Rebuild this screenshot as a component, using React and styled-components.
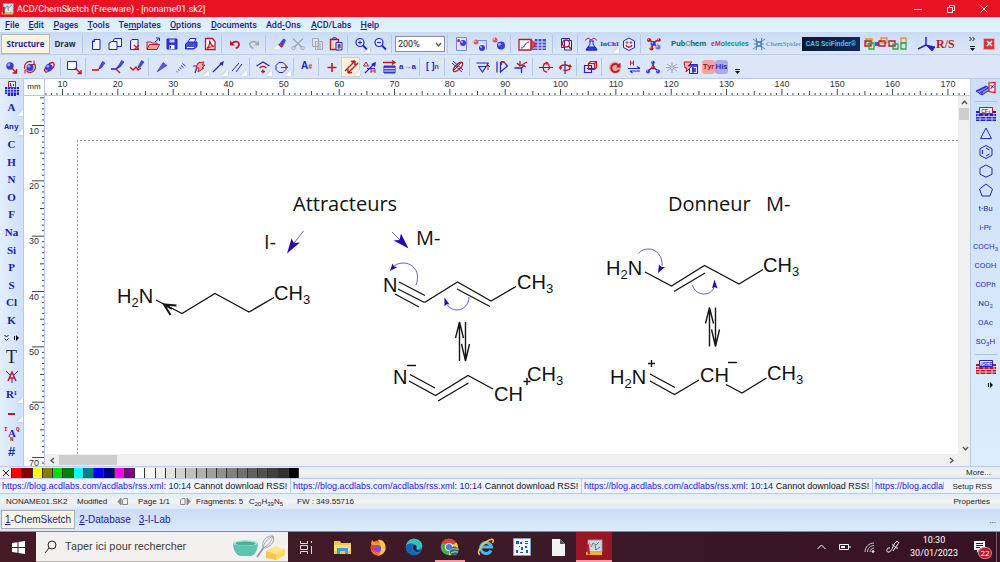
import React, { useEffect, useState } from 'react';
import styled, { createGlobalStyle, css } from 'styled-components';

const B = '#2323c8';
const N = '#1c1c96';
const R = '#c01820';
const G = '#a3a8b3';

const GlobalStyle = createGlobalStyle`
  *, *::before, *::after { box-sizing: border-box; }
  body { margin: 0; font-family: "Liberation Sans", Arial, sans-serif; font-size: 9px; color: #222; }
  button, select, input { font: inherit; color: inherit; }
  button { border: 0; padding: 0; margin: 0; background: none; cursor: pointer; }
  svg { display: block; flex: none; }
`;

const Shell = styled.div`
  min-height: 100vh;
  display: flex;
  flex-direction: column;
  background: #dbe7f8;
  overflow: hidden;
`;
const Spacer = styled.i`
  flex: 1;
`;

/* ---------- title and menu ---------- */

const TitleBar = styled.header`
  height: 17px;
  display: flex;
  align-items: center;
  background: #e81224;
  color: #fff;
`;
const AppTitle = styled.h1`
  margin: 0 auto 0 3px;
  font: 400 9px/16px Roboto, "Open Sans", sans-serif;
`;
const WindowButton = styled.button`
  width: 33px;
  height: 16px;
  display: grid;
  place-items: center;
`;
const MenuBar = styled.nav`
  height: 15px;
  display: flex;
  align-items: center;
  padding-left: 5px;
  gap: 9px;
  background: linear-gradient(#d6efff, #e3f2ff);
  color: #221c8c;
  font: 500 9px/14px Roboto, "Open Sans", sans-serif;
  white-space: nowrap;
`;
const MenuItem = styled.button`
  min-width: ${(p) => p.$w}px;
  text-align: left;
  white-space: nowrap;
`;

/* ---------- toolbars ---------- */

const Toolbar = styled.div`
  height: ${(p) => p.$h}px;
  display: flex;
  align-items: center;
  padding-left: 1px;
  background: ${(p) => (p.$first ? 'linear-gradient(#cadcf5, #dce8f9)' : '#dbe7f8')};
  border-top: 1px solid ${(p) => (p.$first ? '#c9dbf4' : '#b9cff0')};
`;
const Tool = styled.button`
  position: relative;
  flex: none;
  width: ${(p) => p.$w || 19}px;
  height: 20px;
  display: grid;
  place-items: center;
  ${(p) => p.$on && css`background: #fbf2da; outline: 1px solid #d5cfc0; outline-offset: -1px;`}
  ${(p) => p.$menu && css`
    &::after {
      content: '';
      position: absolute;
      right: 0;
      bottom: 1px;
      border: 3px solid;
      border-color: transparent #fff #fff transparent;
      filter: drop-shadow(0 0 1px #a9b8d4);
    }
  `}
`;
const Sep = styled.i`
  flex: none;
  width: 6px;
  height: 18px;
  background: linear-gradient(#b4c8ea, #b4c8ea) 2px 0 / 1px 100% no-repeat;
`;
const ModeButton = styled.button`
  height: 20px;
  width: ${(p) => p.$w}px;
  font: 700 8px/18px "Open Sans", sans-serif;
  color: ${(p) => (p.$on ? N : '#2b2b3c')};
  ${(p) => p.$on && css`background: #fbf4e0; border: 1px solid #b9b9b4;`}
`;
const Combo = styled.label`
  position: relative;
  width: 50px;
  height: 16px;
  svg { position: absolute; right: 3px; top: 5px; pointer-events: none; }
`;
const ZoomSelect = styled.select`
  appearance: none;
  width: 100%;
  height: 100%;
  padding: 0 2px;
  border: 1px solid #8e8e94;
  border-radius: 0;
  background: #fff;
  font: 9px/14px Roboto, sans-serif;
`;
const Brands = styled.div`
  display: flex;
  align-items: center;
  gap: 4px;
  margin-left: 8px;
`;
const Brand = styled.a`
  flex: none;
  display: flex;
  align-items: center;
  gap: ${(p) => p.$gap || 0}px;
  height: 14px;
  width: ${(p) => p.$w}px;
  text-decoration: none;
  white-space: nowrap;
  color: ${(p) => p.$c || N};
  font: ${(p) => p.$font || '700 7px/14px "Liberation Sans", sans-serif'};
  ${(p) => p.$bg && css`background: ${p.$bg}; justify-content: center;`}
  span { color: ${(p) => p.$c2}; }
`;
const ToolbarEnd = styled.div`
  margin-left: auto;
  padding-right: 6px;
  display: flex;
  align-items: center;
  gap: 8px;
`;
const CloseBox = styled.button`
  width: 10px;
  height: 10px;
  display: grid;
  place-items: center;
  background: #d9333b;
  outline: 1px solid #f0a4a4;
`;
const Residues = styled.div`
  display: flex;
  padding-left: 2px;
`;
const Residue = styled.button`
  height: 14px;
  width: 13px;
  border-radius: 3px;
  background: ${(p) => p.$bg};
  color: ${(p) => p.$c};
  font: 500 8px/13px Roboto, sans-serif;
`;

/* ---------- work area ---------- */

const Work = styled.main`
  flex: 1;
  display: flex;
  min-width: 0;
`;
const LeftBar = styled.aside`
  flex: none;
  width: 23px;
  display: flex;
  flex-direction: column;
  align-items: center;
  border-top: 1px solid #b9cff0;
  background: linear-gradient(90deg, #e2eefd, #cfe1f8);
`;
const SideTool = styled(Tool)`
  width: 22px;
  height: 19px;
  color: ${(p) => p.$c || '#2020b0'};
  font: 700 11px/17px "Liberation Serif", serif;
  white-space: nowrap;
  ${(p) => p.$mono && css`font: 700 8px/17px "Liberation Mono", monospace;`}
`;
const Elements = styled.div`
  display: flex;
  flex-direction: column;
  height: 193px;
  ${SideTool} { flex: 1; min-height: 0; height: auto; }
`;
const MoreRow = styled.div`
  flex: none;
  height: 18px;
  width: 100%;
  display: flex;
  align-items: center;
  justify-content: ${(p) => (p.$right ? 'center' : 'space-between')};
  padding: ${(p) => (p.$right ? '0 0 0 9px' : '0 4px')};
`;
const VRulerColumn = styled.div`
  flex: none;
  width: 22px;
  display: flex;
  flex-direction: column;
  background: #fff;
  border: solid #b7cbee;
  border-width: 1px 1px 0 1px;
`;
const Unit = styled.div`
  height: 17px;
  text-align: center;
  font: 8px/15px "Liberation Sans", sans-serif;
  border-bottom: 1px solid #b7cbee;
`;
const RulerBox = styled.div`
  flex: 1;
  position: relative;
  overflow: hidden;
  min-height: 0;
  svg { position: absolute; inset: 0; }
`;
const Center = styled.div`
  flex: 1;
  min-width: 0;
  display: flex;
  flex-direction: column;
  background: #fff;
`;
const HRuler = styled.div`
  height: 18px;
  border-top: 1px solid #b7cbee;
  border-bottom: 1px solid #b7cbee;
  overflow: hidden;
`;
const CanvasRow = styled.div`
  flex: 1;
  display: flex;
  min-height: 0;
`;
const Canvas = styled.div`
  flex: 1;
  min-width: 0;
  overflow: hidden;
`;
const VScroll = styled.div`
  flex: none;
  width: 12px;
  display: flex;
  flex-direction: column;
  align-items: center;
  background: #f0f0f0;
`;
const HScroll = styled.div`
  height: 12px;
  display: flex;
  align-items: center;
  padding-right: 12px;
  background: #f0f0f0;
`;
const ScrollButton = styled.button`
  width: 14px;
  height: 12px;
  display: grid;
  place-items: center;
  margin: ${(p) => (p.$end ? 'auto 0 0 auto' : '0')};
`;
const Thumb = styled.div`
  background: #cdcdcd;
  width: ${(p) => p.$w}px;
  height: ${(p) => p.$h}px;
`;
const RightBar = styled.aside`
  flex: none;
  width: 30px;
  display: flex;
  flex-direction: column;
  align-items: center;
  border: solid #b7cbee;
  border-width: 1px 0 0 1px;
  background: linear-gradient(#cddff7, #dcedfd);
`;
const GroupTool = styled(Tool)`
  width: 28px;
  height: 19px;
  color: #3030cc;
  font: 8px/19px Roboto, "Liberation Sans", sans-serif;
  sub { font-size: 6px; line-height: 1; vertical-align: -2px; }
`;
const SideRule = styled.hr`
  width: 22px;
  height: 1px;
  margin: 3px 0 2px;
  border: 0;
  background: #a9c2ea;
`;

/* ---------- bottom bars ---------- */

const PaletteBar = styled.div`
  height: 12px;
  display: flex;
  align-items: center;
  justify-content: space-between;
  border-top: 1px solid #b7cbee;
  background: linear-gradient(#e3ecfa, #f3f3ef 50%, #dfe9f8);
`;
const Swatches = styled.div`
  width: 299px;
  height: 10px;
  display: flex;
`;
const Swatch = styled.button`
  flex: ${(p) => (p.$none ? '0 0 12px' : '1')};
  background: ${(p) => p.$c};
  border-right: 1px solid #333;
  display: grid;
  place-items: center;
`;
const BarButton = styled.button`
  padding-right: ${(p) => p.$r}px;
  font: 8px/11px "Liberation Sans", sans-serif;
  white-space: nowrap;
`;
const RssBar = styled.div`
  height: 16px;
  display: flex;
  align-items: center;
  justify-content: space-between;
  border: solid #b7cbee;
  border-width: 1px 0;
  background: #f0f4fb;
`;
const Feed = styled.div`
  flex: 1;
  min-width: 0;
  display: flex;
  overflow: hidden;
  margin-right: 8px;
`;
const FeedItem = styled.div`
  flex: none;
  width: 291px;
  padding-left: 2px;
  white-space: nowrap;
  font: 9px/14px "Liberation Sans", sans-serif;
  color: #111;
  background: linear-gradient(#b7cbee, #b7cbee) right / 1px 100% no-repeat;
  a { color: #2222e0; text-decoration: none; }
  time { color: #1c1c80; }
`;
const StatusBar = styled.div`
  height: 15px;
  display: flex;
  align-items: center;
  padding-left: 6px;
  background: linear-gradient(#e3ecfa, #f3f3ef 50%, #dfe9f8);
  font: 8px/14px "Liberation Sans", sans-serif;
  white-space: nowrap;
`;
const Cell = styled.span`
  flex: none;
  width: ${(p) => p.$w}px;
  sub { font-size: 6px; line-height: 1; vertical-align: -2px; }
`;
const Tabs = styled.div`
  height: 23px;
  display: flex;
  align-items: center;
  padding: 0 4px 0 1px;
  background: linear-gradient(#cadcf6, #dceafb);
  border-bottom: 1px solid #7f8ea8;
`;
const Tab = styled.button`
  height: 19px;
  padding: 0 3px;
  margin-bottom: 1px;
  font: 10px/17px "Liberation Sans", sans-serif;
  color: ${N};
  border: 1px solid ${(p) => (p.$on ? '#a9adb0' : 'transparent')};
  background: ${(p) => (p.$on ? '#fbf4e2' : 'none')};
`;

/* ---------- task bar ---------- */

const TaskBar = styled.footer`
  height: 30px;
  display: flex;
  align-items: stretch;
  background: linear-gradient(90deg, #451a26, #3c1a28 50%, #361224);
  color: #fff;
`;
const TaskButton = styled.button`
  width: 36px;
  display: grid;
  place-items: center;
  ${(p) => p.$on && css`background: #9a1526;`}
  ${(p) => p.$open && css`
    background-image: linear-gradient(#f49aa4, #f49aa4);
    background-size: ${p.$on ? '36px' : '30px'} 2px;
    background-position: center bottom;
    background-repeat: no-repeat;
  `}
`;
const Search = styled.label`
  width: 252px;
  display: flex;
  align-items: center;
  padding: 0 2px 0 8px;
  gap: 8px;
  background: #f3f1f0;
  border-bottom: 1px solid #b9b4b4;
`;
const SearchInput = styled.input`
  flex: 1;
  min-width: 0;
  border: 0;
  outline: 0;
  padding: 0;
  background: transparent;
  font: 11px/20px Roboto, "Open Sans", sans-serif;
  &::placeholder { color: #444; opacity: 1; }
`;
const Tray = styled.div`
  margin-left: auto;
  display: flex;
  align-items: center;
`;
const TrayButton = styled.button`
  width: 24px;
  height: 30px;
  display: grid;
  place-items: center;
`;
const Clock = styled.time`
  width: 58px;
  text-align: center;
  font: 9px/13px Roboto, "Open Sans", sans-serif;
`;
const Notice = styled.button`
  position: relative;
  width: 34px;
  height: 30px;
  display: grid;
  place-items: center;
  margin-right: 3px;
  border-right: 1px solid #75606a;
`;
const Badge = styled.span`
  position: absolute;
  right: 4px;
  bottom: 3px;
  width: 14px;
  height: 12px;
  border-radius: 6px;
  background: #b01c2e;
  border: 1px solid #d8838c;
  font: 8px/10px "Open Sans", sans-serif;
`;

/* ---------- icons ---------- */

const Svg = ({ w = 16, h = 16, children }) => (
  <svg width={w} height={h} viewBox={`0 0 ${w} ${h}`} fill="none" stroke={B} strokeWidth="1" aria-hidden="true">{children}</svg>
);
const Ball = ({ x, y, r, c = '#3a3adc' }) => (
  <g stroke="none"><circle cx={x} cy={y} r={r} fill={c} /><circle cx={x - r / 3} cy={y - r / 3} r={r / 2.6} fill="#fff" opacity=".55" /></g>
);
const Pencil = ({ x = 0, y = 0 }) => (
  <g transform={`translate(${x} ${y})`}><path d="M6 8 L9.500 1.500 L12 3 L8.300 8 Z" fill="#4a4ad8" stroke={B} strokeWidth=".6" /><path d="M6 8l-.6 1.800L8 8" fill="#222" stroke="none" /></g>
);

const icons = {
  page: <><path d="M6 3.500h6v10H4.500V5z" fill="#f1f6ff" /><path d="M4.500 5.500H6.500V3.500" /></>,
  pages: <><path d="M7.500 2.500H14.500v8H6.500V4z" fill="#f1f6ff" /><path d="M4.500 5.500H10v8H2V7z" fill="#f1f6ff" /></>,
  pageX: <><path d="M6 3.500h6v10H4.500V5z" fill="#f1f6ff" /><path d="M8 9l5 5M13 9l-5 5" stroke={R} strokeWidth="1.300" /></>,
  open: <><path d="M2 13V6h4l1 1h5v2" fill="#f8dada" stroke={R} /><path d="M2 13.500l2.500-5h10l-2.500 5z" fill="#f2a0a0" stroke={R} /><path d="M10 6l4-3.500M11 2h3.500v3" /></>,
  save: <><path d="M3 3h10v10H3z" fill="#3535d0" /><path d="M5.500 3.500h5v3h-5z" fill="#c3d0f4" stroke="none" /><path d="M5.500 9h5v4h-5z" fill="#fff" stroke="none" /><path d="M6.500 10v2.500" /></>,
  print: <><path d="M5 6l2-3.500h6L11.500 6" fill="#fff" /><path d="M2.500 8L5 6h9v4.500L11 13H2.500z" fill="#3f4fd8" /><path d="M4 11.500h7" stroke="#fff" /></>,
  pdf: <><path d="M3.500 2.500h7l2.500 3v8h-9.500z" fill="#fff" stroke={R} strokeWidth="1.300" /><path d="M5 12.500c2-2 3-5 2.500-8 1 4 2.500 5.500 4.500 6-3 0-5 .5-7 2z" stroke={R} strokeWidth="1.200" /></>,
  undo: <><path d="M5 7.500c3-3.500 8-1.500 7 1.500-.5 2-2 3-3.500 3" stroke={R} strokeWidth="1.600" /><path d="M3 4.500V9.500h5z" fill={R} stroke="none" /></>,
  redo: <><path d="M11 7.500C8 4 3 6 4 9c.5 2 2 3 3.500 3" stroke={G} strokeWidth="1.600" /><path d="M13 4.500V9.500H8z" fill={G} stroke="none" /></>,
  eraser: <><path d="M8.500 7.500l4-5 2.500 1.500-3 6.500z" fill="#4444ce" stroke="none" /><path d="M7 9l1.500-1.500 3.500 3-1.500 1.500z" fill={R} stroke="none" /><path d="M1 13.500h6l3.500-1.500L7 9z" fill="#fff" stroke="#bcc" strokeWidth=".5" /></>,
  cut: <><path d="M3 2.500l9 9M13 2.500l-9 9" stroke={G} strokeWidth="1.300" /><circle cx="3.500" cy="12" r="1.700" stroke={G} /><circle cx="12.500" cy="12" r="1.700" stroke={G} /></>,
  copy: <><path d="M3.500 2.500h6v8h-6zM6.500 5.500h7v8h-7z" fill="#dfe3ea" stroke={G} /><path d="M8 8h4M8 10h4M8 12h4" stroke={G} /></>,
  paste: <><path d="M2.500 3.500h8v10h-8z" fill="#f8d5d5" stroke={R} strokeWidth="1.400" /><path d="M4 3c1-2 4-2 5 0z" fill="#d5e3ff" /><path d="M8 6.500h6v7.500H8z" fill="#dfe6ff" /><path d="M9.500 9h3.500M9.500 11h3.500M11 8v5" stroke="#333" /></>,
  zoomIn: <><circle cx="7" cy="6.500" r="4" fill="#e2ecff" strokeWidth="1.200" /><path d="M10 9.500l4 4" strokeWidth="2" /><path d="M5 6.500h4M7 4.500v4" /></>,
  zoomOut: <><circle cx="7" cy="6.500" r="4" fill="#e2ecff" strokeWidth="1.200" /><path d="M10 9.500l4 4" strokeWidth="2" /><path d="M5 6.500h4" /></>,
  fitPage: <><path d="M3.500 1.500h10v13h-10z" stroke="#7a86d8" fill="#dbe7fb" /><Ball x={10} y={7} r={3} /><Ball x={5.500} y={4.500} r={1.500} c={R} /></>,
  fitWidth: <><path d="M2.500 4.500h12v9" stroke="#7a86d8" /><Ball x={4} y={6} r={2.500} c="#dc5a5a" /><Ball x={10} y={12} r={3} /></>,
  fitAll: <><path d="M4 4l6 6" stroke="#99a" /><Ball x={4} y={4} r={2.500} c="#dc5a5a" /><Ball x={10} y={9.500} r={4} /></>,
  template: <><path d="M1 3.500h12v10.500H1z" fill="#fff" stroke={R} strokeWidth="1.300" /><path d="M3 12c2 0 3-1 4-3s2-3 4-3" /><path d="M17 3h11v11H14z" fill="#4a4ad4" stroke="none" /><path d="M15 6h13M15 9h13M15 12h13M20 3v11M24 3v11" stroke="#d8e2fa" /><path d="M13 3.500l5 5-5 5z" fill="#d8454c" stroke={R} /></>,
  search: <><path d="M3.500 2.500h8v9h-8z" /><path d="M6.500 4.500h7v9.500h-7z" fill="#e8efff" /><circle cx="8" cy="7.500" r="3.500" stroke={R} strokeWidth="1.300" /><path d="M10.500 10l2.500 3" stroke={R} strokeWidth="1.500" /></>,
  flask: <><path d="M2 4.500l3-2.500 3 2 3-2 3 2.500" stroke={R} /><path d="M7 5v3l-4 6h11l-4-6V5M6 5h5" /><path d="M5 11h7l2 3H3z" fill="#3b3bd0" /></>,
  cube: <><path d="M8 2l5.500 3v6.500L8 14.500 2.500 11.500V5z" fill="#e3ecfc" /><path d="M5 9c1 3 5 3 6 0" stroke={R} strokeWidth="1.300" /><circle cx="6" cy="6.500" r=".8" stroke={R} /><circle cx="10" cy="6.500" r=".8" stroke={R} /></>,
  model: <><path d="M3 3l4 4 5-3M7 7l-1 5M7 7l5 4" stroke={R} strokeWidth="1.500" /><Ball x={3} y={4} r={2} c={R} /><Ball x={7} y={7.500} r={2.500} /><Ball x={13} y={4} r={1.800} c={R} /><Ball x={12} y={11} r={2.600} c="#7c6fd8" /><Ball x={5.500} y={12.500} r={2} c={R} /></>,
  move: <><Ball x={7} y={7} r={3.700} /><path d="M8 8l5 5.500M13.500 10v4H9.500" stroke={R} strokeWidth="1.400" /></>,
  rotate: <><circle cx="8" cy="8" r="5.500" stroke={R} strokeWidth="1.300" strokeDasharray="12 3" /><Ball x={8} y={8.500} r={3.500} /><path d="M12 1.500v4H8.500M3 14.500v-3.500h3" stroke={R} /></>,
  spin: <><ellipse cx="8" cy="8.500" rx="6" ry="2.800" transform="rotate(-45 8 8)" stroke={R} strokeWidth="1.300" /><Ball x={8} y={8.500} r={3.500} /></>,
  select: <><path d="M1.500 2.500h9v8h-9z" fill="#fff" /><path d="M9 9l6 5.500M15 11v3.500h-3.500" stroke={R} strokeWidth="1.400" /></>,
  draw1: <><path d="M1 11h7" stroke={R} strokeWidth="1.600" /><Pencil x={2} y={1} /></>,
  draw2: <><path d="M1 10h5l4-4" strokeWidth="1.300" /><path d="M6 10l4 4" stroke={R} strokeWidth="1.400" /><Pencil x={2} /></>,
  draw3: <><path d="M1 8l3 3 3-3 2 3 3-2" stroke={R} strokeWidth="1.300" /><Pencil x={3} y={0} /></>,
  wedge: <path d="M3 13l6-9.500 4 3z" fill="#5858e0" strokeWidth=".5" />,
  hash: <path d="M3.500 12.500l1 .5M5 10.500l1.500 1M6.500 8.500l2 1.500M8 6.500l2.500 2M9.500 4.500l3 2.500" />,
  flash: <><path d="M1 7h5M3 14l2-6 3-5" strokeWidth="1.200" /><path d="M6 4l6-1-2 3h3l-3 3h2l-6 4 1-4-3 0z" fill="#f0b0b0" stroke={R} /></>,
  arrow: <><path d="M2 13l9-9" strokeWidth="1.200" /><path d="M13 2l-1.500 5-3-3z" fill={B} stroke="none" /></>,
  double: <path d="M2 12l7-8M6 13l6-8" />,
  arc: <><path d="M1.500 7L8 3l6.500 4" strokeWidth="1.200" /><path d="M4.500 9c2-2 5-2 7 0" stroke={R} strokeWidth="1.300" /><path d="M6 12.500h4M8 10.500v4" stroke={R} strokeWidth="1.300" /></>,
  ring: <><path d="M5 3.500h4l3 3v4l-3 3H5l-3-3v-4z" /><path d="M7 8.500h7M11.500 6.500L14 8.500" stroke={R} /></>,
  plus: <path d="M3.500 8.500h9M8 4v9" stroke={R} strokeWidth="1.600" />,
  react: <path d="M2 12L12 2M12 2v4M12 2l-4 .500M5 14L15 4M5 14v-4M5 14l4-.500" stroke={R} strokeWidth="1.400" />,
  delta: <><path d="M1.500 7L4 3l2.500 4z" stroke={R} /><path d="M3 14L13 4M5 9.500h8" strokeWidth="1.200" /><path d="M14 3l-1 5-4-3z" fill={B} stroke="none" /><path d="M9 10v4M13 10v4M9 12h4" stroke={R} /></>,
  table: <><path d="M2 3.500h12M11 1.500l3 2-3 2" stroke={R} strokeWidth="1.300" /><path d="M3 7h11v7H3z" fill="#3f53d6" /><path d="M3 9.500h11M3 12h11" stroke="#cfd8fa" /></>,
  benz: <><path d="M2 4l10 9M3 2l10 9M12 3L3 12" /><ellipse cx="8" cy="8" rx="6" ry="2.500" transform="rotate(-45 8 8)" stroke={R} strokeWidth="1.300" /></>,
  flipH: <><path d="M1.500 4h12M3 7.500h8M3.500 7.500l4 5.500 6-9" strokeWidth="1.200" /><path d="M13 6v5M11 8l2-2 2 2" stroke={R} /></>,
  flipV: <><path d="M3 2.500v11M6.500 3v10l7-6-2-2" strokeWidth="1.200" /><path d="M7 4c2-2 4 0 5 1M7.500 6V2.500h3" stroke={R} strokeWidth="1.200" /></>,
  flip3: <><path d="M1.500 9h7v5M8.500 9l3-3" strokeWidth="1.300" /><path d="M7 2v5l7-4M4 4l3 3M13 8L9 6" stroke={R} strokeWidth="1.300" /></>,
  turnH: <><path d="M1 8.500h14" /><path d="M9 4c-5 0-5 9 0 9M9 4c3 2 3 6 1 7" stroke={R} strokeWidth="1.300" /><path d="M8 2.500l3 1.500-3 2z" fill={R} stroke="none" /></>,
  turnV: <><path d="M8 2v13" strokeWidth="1.200" /><path d="M3 9c0-4 10-4 10 0 0 2-4 3-7 2" stroke={R} strokeWidth="1.300" /><path d="M1.500 8h4L3.500 11zM11 8h4l-2-3z" fill={R} stroke="none" /></>,
  box3d: <><path d="M2.500 6.500h7v7h-7zM5 9.500h7" strokeWidth="1.200" /><path d="M6.500 4.500h6v6h-6zM6.500 4.500l2-2h6v6l-2 2M12.500 4.500l2-2" stroke={R} strokeWidth="1.200" /></>,
  clean: <><circle cx="8" cy="8.500" r="6" fill="#eaa6a0" stroke="none" /><path d="M12 7.500a4 4 0 1 0 0 3" stroke={R} strokeWidth="2" /><path d="M13.500 3.500v5H9z" fill={R} stroke="none" /></>,
  hshift: <><path d="M4.500 1.500v5M7.500 1.500v5M4.500 4h3" stroke={R} /><path d="M2 9.500h12M11 7.500l3 2M14 12H4M6.500 14L4 12" strokeWidth="1.200" /></>,
  frag: <><path d="M8 8V3M8 8l-5 4M8 8l5 4" strokeWidth="1.500" /><Ball x={8} y={3.500} r={1.800} /><Ball x={8} y={8.500} r={2} c={R} /><Ball x={3} y={12.500} r={2} /><Ball x={13} y={12.500} r={2} /></>,
  spider: <><path d="M8 3v11M3 5l10 7M13 5L3 12M2 8.500h12" stroke={G} /><circle cx="8" cy="8.500" r="2" fill="#ccd" stroke={G} /></>,
  props: <><path d="M6.500 5.500h8v9h-8z" fill="#dfe7ff" /><path d="M7 7h7M9 10h4M9 12h4M10 8v6" strokeWidth="1.400" /><path d="M1 3h8l-4 4h4l-6 6 1-4H2z" fill="#f2b4b4" stroke={R} /></>,
};
const Icon = ({ name }) => <Svg>{icons[name]}</Svg>;

const Glyph = styled.span`
  font: ${(p) => p.$font || '700 9px/16px "Liberation Mono", monospace'};
  color: ${(p) => p.$c || B};
  white-space: nowrap;
  span { color: ${R}; font-size: ${(p) => p.$s || 'inherit'}; }
`;

const T = ({ n, ...rest }) => <Tool aria-label={n} {...rest}><Icon name={n} /></Tool>;

const Wall = ({ frame = R, brick = B, label }) => (
  <Svg w={22} h={16}>
    <path d="M1 5h20v10H1z" fill={brick} stroke="none" />
    <path d="M1 7.500h20M1 10.500h20M1 13h20M5 5v3M16 5v3M3 8v3M9 8v3M14 8v3M19 8v3M5 11v4M11 11v4M17 11v4" stroke="#e3edfc" strokeWidth=".8" />
    <path d="M4.500 1.500h13v6h-13z" fill="#f4f6ff" stroke={frame} />
    <text x="11" y="6.500" fontSize="5" textAnchor="middle" fontFamily="Liberation Sans" fontWeight="700" fill={frame} stroke="none">{label}</text>
  </Svg>
);

const Chevron = ({ d, c = '#555' }) => <svg width="7" height="7" viewBox="0 0 7 7" fill="none" stroke={c} strokeWidth="1.400" aria-hidden="true"><path d={d} /></svg>;

/* ---------- rulers ---------- */

const STEP = 5.534;
const useWindowWidth = () => {
  const [width, setWidth] = useState(window.innerWidth);
  useEffect(() => {
    const update = () => setWidth(window.innerWidth);
    window.addEventListener('resize', update);
    return () => window.removeEventListener('resize', update);
  }, []);
  return width;
};
const HorizontalRuler = () => {
  const length = useWindowWidth() - 75;
  const ticks = [];
  for (let i = 7; 17.5 + (i - 10) * STEP < length; i += 1) {
    const x = 17.5 + (i - 10) * STEP;
    const len = i % 10 === 0 ? 6 : i % 5 === 0 ? 4 : 2;
    ticks.push(<path key={i} d={`M${x} ${16 - len}V16`} stroke="#444" />);
    if (i % 10 === 0 && x < length - 9) ticks.push(<text key={`t${i}`} x={x} y="8" textAnchor="middle">{i}</text>);
  }
  return <svg width="100%" height="16" fontSize="9" fontFamily="Liberation Sans" fill="#333" aria-hidden="true">{ticks}</svg>;
};
const VerticalRuler = () => {
  const ticks = [];
  for (let i = 5; i < 72; i += 1) {
    const y = 29.5 + (i - 10) * STEP;
    const len = i % 10 === 0 ? 12 : i % 5 === 0 ? 4 : 2;
    ticks.push(<path key={i} d={`M${20 - len} ${y}H20`} stroke="#444" />);
    if (i % 10 === 0) ticks.push(<text key={`t${i}`} x="10" y={y + 8} textAnchor="middle">{i}</text>);
  }
  return <svg width="20" height="100%" fontSize="9" fontFamily="Liberation Sans" fill="#333" aria-hidden="true">{ticks}</svg>;
};

/* ---------- molecule drawing ---------- */

const Formula = ({ x, y, parts }) => (
  <text x={x} y={y} fontSize="20">
    {parts.map((p, i) => (typeof p === 'number'
      ? <tspan key={i} fontSize="13" dy="4">{p}</tspan>
      : <tspan key={i} dy={i ? -4 : 0}>{p}</tspan>))}
  </text>
);
const Equilibrium = ({ x, y }) => (
  <path d={`M${x} ${y + 39}V${y}l-4 16M${x} ${y}l4 16M${x + 6} ${y}v39l-4-17M${x + 6} ${y + 39}l4-17`} />
);
const Sketch = () => (
  <svg width="913" height="358" viewBox="45 96 913 358" role="img" aria-label="Structures">
    <path d="M77.500 454V140.500H958" fill="none" stroke="#999" strokeDasharray="2 2" />
    <g fontFamily="Open Sans, Noto Sans, sans-serif" fontSize="20" fill="#111">
      <text x="293" y="211">Attracteurs</text>
      <text x="668" y="211">Donneur</text>
      <text x="766" y="211">M-</text>
      <text x="264" y="249">I-</text>
      <text x="416" y="245">M-</text>
    </g>
    <g fontFamily="Liberation Sans, Arial, sans-serif" fill="#111">
      <Formula x={117} y={303} parts={['H', 2, 'N']} />
      <Formula x={274} y={300} parts={['CH', 3]} />
      <Formula x={383} y={292} parts={['N']} />
      <Formula x={517} y={289} parts={['CH', 3]} />
      <Formula x={393} y={384} parts={['N']} />
      <Formula x={494} y={401} parts={['CH']} />
      <Formula x={527} y={381} parts={['CH', 3]} />
      <Formula x={606} y={275} parts={['H', 2, 'N']} />
      <Formula x={763} y={272} parts={['CH', 3]} />
      <Formula x={610} y={384} parts={['H', 2, 'N']} />
      <Formula x={700} y={382} parts={['CH']} />
      <Formula x={767} y={380} parts={['CH', 3]} />
    </g>
    <g fill="none" stroke="#151515" strokeWidth="1.400">
      <path d="M156 300L182 313.500L215 293.500L249 312L274 297.500" />
      <path d="M176.500 305.500L164 304.500L170.500 315M164 304.500L172 309" strokeWidth="2" />
      <path d="M399 282L425 295.500M398 289L424.500 302.500M395 294L419 307" />
      <path d="M424.500 302.500L457.500 282L491 301L516 286.500M457 289L490 306.500" />
      <Equilibrium x={459.5} y={322} />
      <path d="M409 381L435.500 395.500L468 375.500L493 389M410 374.500L435 388M438 401L468.500 383" />
      <path d="M407 365.500h9M523.500 381.500h7M527 378v7" />
      <path d="M645 272L671.500 286L704.500 265.500L739 284L763 269.500M674 291.500L705 273" />
      <Equilibrium x={709.5} y={307.5} />
      <path d="M650 381L674.500 394.500L699 380M650 374L675 387.500M726 384.500L742 393L766.500 378" />
      <path d="M648 363.500h7M651.500 360v7M728 362.500h9" />
    </g>
    <g fill="none" stroke="#6a5acd">
      <path d="M303.500 231L294 243M392 232L400 240" />
      <path d="M416 285C421 272 413 263 403 263C398 263 395 265 393 267" />
      <path d="M469 297C469 304 464 310 457 310C452 310 448 307 446 303" />
      <path d="M638.500 253.500C641 250 645 249 649 249C656 249 663 256 662 266" />
      <path d="M692.500 285C694 291 699 294 704 294C709 294 713 291 714 287" />
    </g>
    <g fill="#2a08a8">
      <path d="M287 253.500L291.500 238.500L294 243L300 242.500Z" />
      <path d="M408.500 248.500L393.500 240.500L399.500 240L401 233.500Z" />
      <path d="M390 271L392.500 263.500L394 266.500L397.500 267Z" />
      <path d="M444.500 297.500L444.500 306.500L446.500 304L449.500 304.500Z" />
      <path d="M658 273L659 264.500L661.500 267L665 267Z" />
      <path d="M714.500 279.500L712 288.500L714.500 287L717.500 288.500Z" />
    </g>
  </svg>
);

/* ---------- data ---------- */

const menus = [['F', 'ile', 14], ['E', 'dit', 16], ['P', 'ages', 24], ['T', 'ools', 22], ['', 'Templates', 41], ['O', 'ptions', 32], ['D', 'ocuments', 46], ['', 'Add-Ons', 36], ['A', 'CD/Labs', 40], ['H', 'elp', 19]];
const elements = ['C', 'H', 'N', 'O', 'F', 'Na', 'Si', 'P', 'S', 'Cl', 'K'];
const colors = ['#f00', '#800000', '#ff0', '#808000', '#00e000', '#008000', '#0ff', '#008080', '#00f', '#000080', '#f0f', '#800080',
  '#fff', '#f7f7f7', '#efefef', '#e2e2e2', '#d2d2d2', '#c0c0c0', '#b0b0b0', '#a0a0a0', '#909090', '#808080', '#707070', '#606060', '#505050', '#404040', '#303030', '#000'];

const Firefox = () => (
  <svg width="18" height="18" viewBox="0 0 18 18"><circle cx="9" cy="10" r="7.500" fill="#ff6a2b" /><path d="M9 2c5-1 8 4 7.500 9-1 4-4 6.500-8 6.500C13 15 13 9 9 2z" fill="#ffc83a" /><path d="M2 6l1-4 3 3c3-1 6 1 6 5z" fill="#ff9a2a" /><circle cx="8.500" cy="10.500" r="3.600" fill="#7a4de0" /><path d="M2 7c3 0 5 0 6 3-3-1-4 1-3 4-2-1-4-4-3-7z" fill="#f0304f" /></svg>
);
const Edge = () => (
  <svg width="18" height="18" viewBox="0 0 18 18"><circle cx="9" cy="9" r="8.300" fill="#1478d4" /><path d="M1 8C2 3 5 .7 9.500.7c5 0 8 4 7.800 7 0 3-3 4-6 3.500 1.500-3-.5-5.500-4-5.500C4 5.700 2 7 1 8z" fill="#35c1b5" /><path d="M1 8c2-3 6-3 8-1-3 1-3 6 1 8 3 1 5 0 6-2-1 3-4 4.500-7 4.300C4 17 0 13 1 8z" fill="#1465b8" /><path d="M11 11c1.500-3-.5-4-2-4-2 2-1 6 3 7 2 0 4-1 4.500-2-2 1-4.500.5-5.500-1z" fill="#3b1a28" /></svg>
);
const Chrome = () => (
  <svg width="20" height="18" viewBox="0 0 20 18"><circle cx="9" cy="9" r="8.300" fill="#4caf50" /><path d="M9 9L1.800 4.800A8.300 8.300 0 0 1 16.200 5z" fill="#e5402f" /><path d="M9 9l7.500-4.500A8.300 8.300 0 0 1 9 17.300z" fill="#fcc934" /><circle cx="9" cy="9" r="4" fill="#fff" /><circle cx="9" cy="9" r="3.100" fill="#3f7fe8" /><circle cx="14" cy="13" r="4.500" fill="#356a73" /><path d="M10 12c3-3 6 0 9-1M11 15c3-2 5-1 7-1" stroke="#b8d6d8" fill="none" /></svg>
);
const Explorer = () => (
  <svg width="18" height="18" viewBox="0 0 18 18" fill="none"><path d="M14 12.500a5.500 5.500 0 1 1 .5-3.500H5" stroke="#45b8f0" strokeWidth="3" /><path d="M3 16.500C-1 16 4 7 9 4c5-3.500 9-4 6.500 1" stroke="#f6c838" strokeWidth="1.600" /></svg>
);
const SketchApp = () => (
  <svg width="18" height="18" viewBox="0 0 18 18"><path d="M3 2h14v12H3z" fill="#cfd9df" stroke="#8899a4" /><path d="M6 9l2-4 3 2 3-3M10 7l1 5 4-3" fill="none" stroke="#5f7b90" /><path d="M1 14h16v3H1z" fill="#f2b62c" /><path d="M2 7l2-1 1 10-2 1z" fill="#c01828" /><path d="M4 5l3 3" stroke="#e08080" /></svg>
);

export default function App() {
  return (
    <Shell>
      <GlobalStyle />
      <TitleBar>
        <svg width="14" height="14" viewBox="0 0 18 18"><path d="M4 2h13v12H4z" fill="#dbe8f0" stroke="#7da0b8" /><path d="M6 9l3-4 3 2 3-3M10 7l1 4" fill="none" stroke="#38698c" /><path d="M2 13h15v3H2z" fill="#e8b64a" /><path d="M4 6h2v9H4z" fill="#a01020" /></svg>
        <AppTitle>ACD/ChemSketch (Freeware) - [noname01.sk2]</AppTitle>
        <WindowButton aria-label="Minimize"><svg width="8" height="8" stroke="#fff"><path d="M0 4.500h8" /></svg></WindowButton>
        <WindowButton aria-label="Restore"><svg width="8" height="8" stroke="#fff" fill="none"><path d="M.5 2.500h5v5h-5zM2.500 2.500v-2h5v5h-2" /></svg></WindowButton>
        <WindowButton aria-label="Close"><svg width="8" height="8" stroke="#fff"><path d="M.5.5l7 7M7.500.5l-7 7" /></svg></WindowButton>
      </TitleBar>
      <MenuBar>
        {menus.map(([u, rest, w]) => (
          <MenuItem key={rest} $w={w}>
            {rest === 'Templates' ? <>Te<u>m</u>plates</> : rest === 'Add-Ons' ? <>Add<u>-</u>Ons</> : <><u>{u}</u>{rest}</>}
          </MenuItem>
        ))}
      </MenuBar>

      <Toolbar $h={22} $first>
        <ModeButton $w={49} $on>Structure</ModeButton>
        <ModeButton $w={30}>Draw</ModeButton>
        <Sep />
        {['page', 'pages', 'pageX', 'open', 'save', 'print', 'pdf'].map((n) => <T key={n} n={n} />)}
        <Sep />
        <T n="undo" /><T n="redo" />
        <Sep />
        <T n="eraser" /><T n="cut" /><T n="copy" /><T n="paste" />
        <Sep />
        <T n="zoomIn" $menu /><T n="zoomOut" />
        <Sep />
        <Combo>
          <ZoomSelect aria-label="Zoom" defaultValue="200%"><option>100%</option><option>200%</option></ZoomSelect>
          <Chevron d="M1 2l2.500 3L6 2" />
        </Combo>
        <Sep />
        <T n="fitPage" /><T n="fitWidth" /><T n="fitAll" />
        <Sep />
        <Tool $w={36} aria-label="Templates"><Svg w={29} h={16}>{icons.template}</Svg></Tool>
        <Sep />
        <T n="search" />
        <Sep />
        <T n="flask" />
        <Tool $menu aria-label="InChI"><Glyph $font='700 7px/16px "Liberation Serif", serif'>InChI</Glyph></Tool>
        <T n="cube" />
        <Sep />
        <T n="model" />
        <Brands>
          <Brand href="#pubchem" $w={36} $c="#0c6a70" $c2="#8a96a0" $font='700 8px/14px Roboto, sans-serif'>Pub<span>C</span>hem</Brand>
          <Brand href="#emolecules" $w={38} $c="#1d8a78" $c2="#c03848">
            <span>eM</span>olecules
          </Brand>
          <Brand href="#chemspider" $w={45} $gap={1} $c="#4a7fae" $font='400 7px/14px "Liberation Serif", serif'>
            <svg width="12" height="12" viewBox="0 0 12 12" fill="none" stroke="#4a7fae"><path d="M0 1l4 3h4l4-3M0 11l4-3h4l4 3M1 6h3M8 6h3" /><path d="M4 4h4v4H4z" strokeWidth="1.500" /><path d="M3 0l1 4M9 0L8 4M3 12l1-4M9 12L8 8" /></svg>
            ChemSpider
          </Brand>
          <Brand href="#scifinder" $w={58} $c="#46c3ee" $bg="linear-gradient(90deg, #0b1830, #12285a)" $font='700 7px/14px Roboto, sans-serif'>CAS SciFinder®</Brand>
          <Brand href="#blocks" $w={49}>
            <svg width="44" height="14" viewBox="0 0 44 14" fill="none" strokeWidth="1.300"><path d="M2 2h6v5H2z" stroke="#e0932c" /><path d="M1 4h6v5H1z" stroke={R} /><path d="M5 6h5v6H5z" stroke="#36a04c" /><path d="M11 6h4M11 8h4" stroke={B} /><path d="M17 1h6v5h-6z" stroke="#e0932c" /><path d="M15 4h6v5h-6z" stroke={R} /><path d="M25 4h6v5h-6z" stroke={R} /><path d="M29 7h5v5h-5z" stroke="#36a04c" /><path d="M37 1h5v5h-5z" stroke="#e0932c" /><path d="M37 6h5v6h-5z" stroke="#36a04c" /></svg>
          </Brand>
          <Brand href="#rs" $w={40} $c={R} $font='700 12px/14px "Liberation Serif", serif'>
            <svg width="19" height="14" viewBox="0 0 19 14" fill="none" stroke={B}><path d="M9 0v8L1 12" strokeWidth="1.500" /><path d="M9 8l9 2-3 4z" fill={B} /></svg>
            R/S
          </Brand>
        </Brands>
        <ToolbarEnd>
          <svg width="7" height="16" viewBox="0 0 7 16" fill="none" stroke="#111" aria-hidden="true"><path d="M.5 1l2 2-2 2M3.500 1l2 2-2 2" /><path d="M1 10.500h5" /><path d="M1 12h5l-2.500 3z" fill="#111" stroke="none" /></svg>
          <CloseBox aria-label="Close toolbar"><Chevron c="#fff" d="M1 1l5 5M6 1L1 6" /></CloseBox>
        </ToolbarEnd>
      </Toolbar>

      <Toolbar $h={24}>
        <T n="move" /><T n="rotate" /><T n="spin" />
        <Sep /><T n="select" />
        <Sep /><T n="draw1" /><T n="draw2" /><T n="draw3" />
        <Sep /><T n="wedge" /><T n="hash" /><T n="flash" $menu /><T n="arrow" $menu /><T n="double" $menu />
        <Sep /><T n="arc" $menu /><T n="ring" $menu />
        <Sep /><Tool aria-label="Number atoms"><Glyph $font='700 10px/16px "Liberation Sans", sans-serif' $s="7px">A<span>#</span></Glyph></Tool>
        <Sep /><T n="plus" /><T n="react" $on $menu /><T n="delta" /><T n="table" />
        <Tool aria-label="Map atoms"><Glyph $font='700 8px/16px "Liberation Sans", sans-serif'>a<span>→</span>a</Glyph></Tool>
        <Sep /><Tool aria-label="Polymer"><Glyph $font='700 9px/16px "Liberation Sans", sans-serif' $s="7px">[ ]<span>n</span></Glyph></Tool>
        <Sep /><T n="benz" />
        <Sep /><T n="flipH" /><T n="flipV" /><T n="flip3" />
        <Sep /><T n="turnH" /><T n="turnV" />
        <Sep /><T n="box3d" />
        <Sep /><T n="clean" /><T n="hshift" /><T n="frag" /><T n="spider" /><T n="props" />
        <Residues>
          <Residue $bg="#f3a3a8" $c="#8c1620">Tyr</Residue>
          <Residue $bg="#a9a9ea" $c="#22229c">His</Residue>
        </Residues>
        <Tool aria-label="Toolbar options"><svg width="5" height="14" aria-hidden="true"><path d="M0 9h5v1H0zM0 11h5L2.500 14z" fill="#111" /></svg></Tool>
      </Toolbar>

      <Work>
        <LeftBar>
          <SideTool aria-label="Periodic table"><Svg w={16} h={16}><path d="M1 6h14v8h-3v1H3v-2H1z" fill={B} stroke="none" /><path d="M1 8.500h14M1 11h14M3.500 6v9M6.500 6v9M9.500 6v9M12.500 6v9" stroke="#d9e6fb" strokeWidth=".7" /><path d="M4.500.5h7v6h-7z" fill="#fff" stroke={R} /><path d="M6.500 2v3h1.500M9.500 3v2" /></Svg></SideTool>
          <SideTool $menu>A</SideTool>
          <SideTool $menu $mono>Any</SideTool>
          <Elements>{elements.map((e) => <SideTool key={e}>{e}</SideTool>)}</Elements>
          <MoreRow>
            <svg width="5" height="8" fill="none" stroke="#111" aria-hidden="true"><path d="M.5 1l2 2 2-2M.5 4.500l2 2 2-2" /></svg>
            <svg width="5" height="6" fill="#111" aria-hidden="true"><path d="M0 1h1v4H0zM2 0l3 3-3 3z" /></svg>
          </MoreRow>
          <SideTool $c="#222" aria-label="Text"><Glyph $c="#222" $font='400 18px/16px "Liberation Serif", serif'>T</Glyph></SideTool>
          <SideTool $c={R} aria-label="Atom label"><Svg><path d="M2 3l4 4M14 3l-4 4M8 11v4" /><path d="M4 13L8 4l4 9M5 10h6" stroke={R} strokeWidth="1.500" /></Svg></SideTool>
          <SideTool $menu>R¹</SideTool>
          <SideTool $menu aria-label="Charge"><svg width="7" height="2"><path d="M0 0h7v2H0z" fill={R} /></svg></SideTool>
          <SideTool aria-label="Properties of atom"><Svg><text x="8" y="12" textAnchor="middle" fontFamily="Liberation Serif" fontWeight="700" fontSize="11" fill={B} stroke="none">A</text><g fontFamily="Liberation Mono" fontWeight="700" fontSize="6" fill={R} stroke="none"><text x="0" y="6">I</text><text x="12" y="6">Q</text><text x="6" y="16">N</text></g></Svg></SideTool>
          <SideTool><Glyph $font='700 13px/16px "Liberation Sans", sans-serif'>#</Glyph></SideTool>
        </LeftBar>

        <VRulerColumn>
          <Unit>mm</Unit>
          <RulerBox><VerticalRuler /></RulerBox>
        </VRulerColumn>

        <Center>
          <HRuler><HorizontalRuler /></HRuler>
          <CanvasRow>
            <Canvas><Sketch /></Canvas>
            <VScroll>
              <ScrollButton aria-label="Scroll up"><Chevron d="M1 5l2.500-3L6 5" /></ScrollButton>
              <Thumb $w={10} $h={12} />
              <ScrollButton $end aria-label="Scroll down"><Chevron d="M1 2l2.500 3L6 2" /></ScrollButton>
            </VScroll>
          </CanvasRow>
          <HScroll>
            <ScrollButton aria-label="Scroll left"><Chevron d="M5 1L2 3.500 5 6" /></ScrollButton>
            <Thumb $w={58} $h={10} />
            <ScrollButton $end aria-label="Scroll right"><Chevron d="M2 1l3 2.500L2 6" /></ScrollButton>
          </HScroll>
        </Center>

        <RightBar>
          <GroupTool aria-label="Dictionary"><Svg w={22} h={16}><path d="M1 10l10-5 5 3-9 6z" fill="#8c95ea" /><path d="M3 10l8-4M5 12l8-5M7 14v-4" /><path d="M14 2l6-.5v10l-6-1z" fill="#f7eaf0" stroke={R} strokeWidth="1.200" /><path d="M15.500 8l3-4M15.500 4l3 3" /></Svg></GroupTool>
          <SideRule />
          <GroupTool aria-label="Radicals"><Wall label="CF₃" /></GroupTool>
          <GroupTool aria-label="Cyclopropane"><Svg><path d="M8 3l5.500 10.500h-11z" /></Svg></GroupTool>
          <GroupTool aria-label="Benzene"><Svg><path d="M8 1.500l6 3.200v6.600L8 14.500l-6-3.200V4.700z" /><path d="M4.500 6v4M8 4l3.500 2M8 12l3.500-2" /></Svg></GroupTool>
          <GroupTool aria-label="Cyclohexane"><Svg><path d="M8 2l6 3.200v6L8 14.200l-6-3v-6z" /></Svg></GroupTool>
          <GroupTool aria-label="Cyclopentane"><Svg><path d="M8 2l6.500 5-2.500 7H4L1.500 7z" /></Svg></GroupTool>
          <GroupTool>t-Bu</GroupTool>
          <GroupTool>i-Pr</GroupTool>
          <GroupTool><span>COCH<sub>3</sub></span></GroupTool>
          <GroupTool>COOH</GroupTool>
          <GroupTool>COPh</GroupTool>
          <GroupTool><span>NO<sub>2</sub></span></GroupTool>
          <GroupTool>OAc</GroupTool>
          <GroupTool><span>SO<sub>3</sub>H</span></GroupTool>
          <SideRule />
          <GroupTool aria-label="User radicals"><Wall label="USER" frame={B} brick={R} /></GroupTool>
          <MoreRow $right><svg width="5" height="6" fill="#111" aria-hidden="true"><path d="M0 1h1v4H0zM2 0l3 3-3 3z" /></svg></MoreRow>
        </RightBar>
      </Work>

      <PaletteBar>
        <Swatches>
          <Swatch $none $c="#f2f2f0" aria-label="No colour"><svg width="8" height="8" stroke="#222"><path d="M1 1l6 6M7 1L1 7" /></svg></Swatch>
          {colors.map((c) => <Swatch key={c} $c={c} aria-label={c} />)}
        </Swatches>
        <BarButton $r={9}>More...</BarButton>
      </PaletteBar>
      <RssBar>
        <Feed>
          {[0, 1, 2, 3].map((i) => (
            <FeedItem key={i}><a href="https://blog.acdlabs.com/acdlabs/rss.xml">https://blog.acdlabs.com/acdlabs/rss.xml:</a> <time>10:14</time> Cannot download RSS!</FeedItem>
          ))}
        </Feed>
        <BarButton $r={8}>Setup RSS</BarButton>
      </RssBar>
      <StatusBar>
        <Cell $w={71}>NONAME01.SK2</Cell>
        <Cell $w={40}>Modified</Cell>
        <Cell $w={21}><svg width="12" height="9" fill="none" stroke="#888" aria-hidden="true"><path d="M4 1v7L1 4.500z" fill="#888" /><path d="M7 1.500h3.500v6h-5V3z" /></svg></Cell>
        <Cell $w={41}>Page 1/1</Cell>
        <Cell $w={17}><svg width="12" height="9" fill="none" stroke="#888" aria-hidden="true"><path d="M8 1v7l3-3.500z" fill="#888" /><path d="M3 1.500h3v6H1.500V3z" /></svg></Cell>
        <Cell $w={53}>Fragments: 5</Cell>
        <Cell $w={48}>C<sub>20</sub>H<sub>39</sub>N<sub>5</sub></Cell>
        <Cell>FW : 349.55716</Cell>
        <Spacer />
        <BarButton $r={10}>Properties</BarButton>
      </StatusBar>
      <Tabs>
        <Tab $on><u>1</u>-ChemSketch</Tab>
        <Tab><u>2</u>-Database</Tab>
        <Tab><u>3</u>-I-Lab</Tab>
        <Spacer />
        <BarButton>...</BarButton>
      </Tabs>

      <TaskBar>
        <TaskButton aria-label="Start"><svg width="13" height="13" fill="#fff"><path d="M0 2l5.500-.8V6H0zM6.500 1L13 0v6H6.500zM0 7h5.500v4.800L0 11zM6.500 7H13v6l-6.500-1z" /></svg></TaskButton>
        <Search>
          <svg width="13" height="14" fill="none" stroke="#222" aria-hidden="true"><circle cx="8" cy="5" r="4" /><path d="M5 8l-4 5" /></svg>
          <SearchInput placeholder="Taper ici pour rechercher" aria-label="Taper ici pour rechercher" />
          <svg width="54" height="26" viewBox="0 0 54 26" aria-hidden="true">
            <path d="M1 9h25c0 7-3 12-7 13H8C4 21 1 16 1 9z" fill="#5cc5b0" /><ellipse cx="13.500" cy="9" rx="12.500" ry="3" fill="#a5e9dc" /><ellipse cx="13.500" cy="9.500" rx="10" ry="2" fill="#4fae9c" />
            <path d="M25 23l7-10" stroke="#9c95b8" strokeWidth="2" /><path d="M31 14c-2-6 3-13 10-12 3 5-3 12-10 12zM31 14c1-5 4-9 10-12M31 14c4-2 8-5 10-12" fill="#ececf2" stroke="#a7a7b5" />
            <path d="M34 17l9-5 10 3-9 5z" fill="#ffe58a" /><path d="M34 17l10 3v6l-10-2z" fill="#f4c948" /><path d="M44 20l9-5v6l-9 5z" fill="#ffd863" />
          </svg>
        </Search>
        <TaskButton aria-label="Task view"><svg width="14" height="13" fill="none" stroke="#ddd"><path d="M1.500 4.500h7v4h-7zM1.500 0v2.500h7V0M1.500 13v-2.500h7V13M12.500 0v2M12.500 5v8" /></svg></TaskButton>
        <TaskButton aria-label="Files"><svg width="17" height="15"><path d="M0 1h6l1 2h10v11H0z" fill="#f5c44a" /><path d="M0 5h17v6H0z" fill="#ffdf83" /><path d="M3 8h11v6h-3v-3H6v3H3z" fill="#3f9be0" /></svg></TaskButton>
        <TaskButton aria-label="Firefox"><Firefox /></TaskButton>
        <TaskButton aria-label="Edge"><Edge /></TaskButton>
        <TaskButton $open aria-label="Chrome"><Chrome /></TaskButton>
        <TaskButton aria-label="Internet Explorer"><Explorer /></TaskButton>
        <TaskButton aria-label="Mosaic"><svg width="18" height="18"><path d="M.5.5h17v17H.5z" fill="#f4f8fc" stroke="#7ba0cc" /><path d="M3 3h3v3H3zM7 4h2v2H7zM12 3h3v1h-3zM12 5h3v1h-3zM3 12h2v3H3zM8 9h2v3H8zM6 8h1v1H6zM12 8h2v2h-2zM13 12h2v3h-2zM7 14h3v1H7z" fill="#2a55a8" /></svg></TaskButton>
        <TaskButton aria-label="Document"><svg width="13" height="17"><path d="M0 0h8l5 5v12H0z" fill="#f2f2f2" /><path d="M8 0v5h5z" fill="#555" /></svg></TaskButton>
        <TaskButton $open $on aria-label="ChemSketch"><SketchApp /></TaskButton>
        <Tray>
          <TrayButton aria-label="Hidden icons"><svg width="9" height="6" fill="none" stroke="#fff"><path d="M.5 5l4-4 4 4" /></svg></TrayButton>
          <TrayButton aria-label="Battery"><svg width="12" height="8" fill="none" stroke="#fff"><path d="M.5 1.500h9v5h-9zM11 3v2" /><path d="M2 3h4v2H2z" fill="#fff" stroke="none" /></svg></TrayButton>
          <TrayButton aria-label="Network"><svg width="11" height="11" fill="none" stroke="#ccc"><path d="M1 10C1 5 5 1 10 1M3.500 10C3.500 6.500 6.500 3.500 10 3.500M6 10c0-2 2-4 4-4" /><circle cx="9" cy="9.500" r="1" fill="#fff" /></svg></TrayButton>
          <TrayButton aria-label="Pen"><svg width="14" height="14" fill="none" stroke="#fff"><path d="M4 8c-4-1-4 5-1 4 3-1 4-6 6-9 2-3 5-1 3 1L7 11M6 5c2-1 3 4 6 3" /></svg></TrayButton>
          <Clock>10:30<br />30/01/2023</Clock>
          <Notice aria-label="Notifications">
            <svg width="13" height="12" fill="#fff"><path d="M1 0h11v9H6l-2 3V9H1z" /><path d="M3 2.500h7M3 4.500h7M3 6.500h4" stroke="#361224" /></svg>
            <Badge>22</Badge>
          </Notice>
        </Tray>
      </TaskBar>
    </Shell>
  );
}
